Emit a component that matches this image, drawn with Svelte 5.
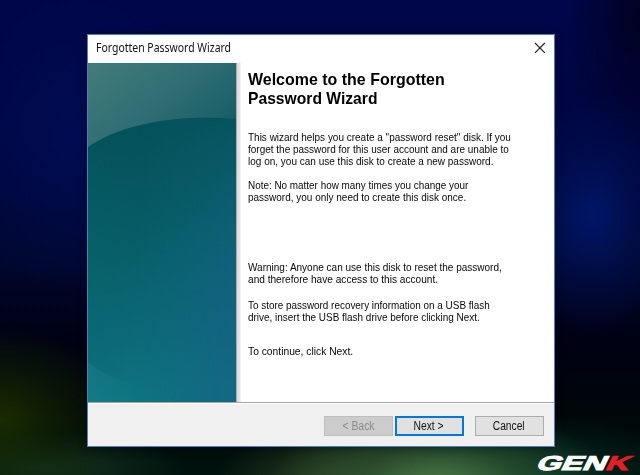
<script>
  const groups = [
    { top: 22.5, lines: [
      ['This wizard helps you create a "password reset" disk. If you', 263],
      ['forget the password for this user account and are unable to', 260.5],
      ['log on, you can use this disk to create a new password.', 245.5]
    ] },
    { top: 12, lines: [
      ['Note: No matter how many times you change your', 220.5],
      ['password, you only need to create this disk once.', 218]
    ] },
    { top: 57, lines: [
      ['Warning: Anyone can use this disk to reset the password,', 254],
      ['and therefore have access to this account.', 190]
    ] },
    { top: 14, lines: [
      ['To store password recovery information on a USB flash', 242],
      ['drive, insert the USB flash drive before clicking Next.', 232]
    ] },
    { top: 21.5, lines: [['To continue, click Next.', 105.5]] }
  ];

  // Condenses a line of text to the given width in pixels.
  function fit(node, width) {
    node.style.transform = `scaleX(${width / node.offsetWidth})`;
  }
</script>

<main class="desktop">
  <section class="window">
    <header>
      <span class="fit" use:fit={135}>Forgotten Password Wizard</span>
      <svg class="close" width="12" height="12" viewBox="0 0 12 12" aria-label="Close">
        <path d="M1 1 10.8 10.8M10.8 1 1 10.8" />
      </svg>
    </header>
    <div class="content">
      <svg class="banner" width="148" height="339" viewBox="0 0 148 339" preserveAspectRatio="none">
        <defs>
          <linearGradient id="sky" x1="0" y1="0" x2="1" y2="1" gradientUnits="objectBoundingBox">
            <stop offset="0" stop-color="#437b7b" />
            <stop offset=".38" stop-color="#306f74" />
            <stop offset="1" stop-color="#06505c" />
          </linearGradient>
          <linearGradient id="sea" x1="0.3" y1="0" x2="0.45" y2="1">
            <stop offset="0" stop-color="#055059" />
            <stop offset=".4" stop-color="#075c66" />
            <stop offset=".75" stop-color="#0c6a78" />
            <stop offset="1" stop-color="#0f7884" />
          </linearGradient>
          <linearGradient id="side" x1="0" y1="0" x2="1" y2="0.15">
            <stop offset="0" stop-color="#00736a" stop-opacity=".32" />
            <stop offset=".4" stop-color="#0d6374" stop-opacity=".05" />
            <stop offset="1" stop-color="#155f83" stop-opacity=".65" />
          </linearGradient>
          <linearGradient id="fade" x1="0" y1="0" x2="0" y2="1">
            <stop offset=".1" stop-color="#000" />
            <stop offset=".7" stop-color="#fff" />
          </linearGradient>
          <linearGradient id="glow" x1="0" y1="0" x2="1" y2="0">
            <stop offset="0" stop-color="#43a9ad" stop-opacity=".15" />
            <stop offset="1" stop-color="#43a9ad" stop-opacity="0" />
          </linearGradient>
          <mask id="lower"><rect width="148" height="339" fill="url(#fade)" /></mask>
        </defs>
        <rect width="148" height="120" fill="url(#sky)" />
        <path d="M0 84C32 62 85 51 148 56V339H0Z" fill="url(#sea)" />
        <path d="M0 84C32 62 85 51 148 56V339H0Z" fill="url(#side)" mask="url(#lower)" />
        <path d="M0 299Q20 316 48 322V339H0Z" fill="url(#glow)" />
      </svg>
      <div class="shade"></div>
      <article>
        <h1>
          <span class="fit" use:fit={196.5}>Welcome to the Forgotten</span>
          <span class="fit" use:fit={129}>Password Wizard</span>
        </h1>
        {#each groups as group}
          <p style="margin-top: {group.top}px">
            {#each group.lines as [text, width]}
              <span class="fit" use:fit={width}>{text}</span>
            {/each}
          </p>
        {/each}
      </article>
    </div>
    <footer>
      <button class="back" disabled><span class="fit label" use:fit={32}>&lt; Back</span></button>
      <button class="next"><span class="fit label" use:fit={30}>Next &gt;</span></button>
      <button class="cancel"><span class="fit label" use:fit={31.5}>Cancel</span></button>
    </footer>
  </section>
  <div class="logo">GEN<b>K</b></div>
</main>

<style>
  :global(body) { margin: 0; }
  .desktop {
    position: relative;
    box-sizing: border-box;
    width: 640px;
    height: 475px;
    padding: 34px 0 0 87px;
    overflow: hidden;
    font-family: "Liberation Sans", Arial, sans-serif;
    background:
      radial-gradient(ellipse 170px 80px at 440px 485px, rgba(83, 130, 75, .95), rgba(50, 90, 52, .65) 48%, transparent),
      radial-gradient(ellipse 120px 55px at 335px 480px, rgba(62, 83, 42, .7), transparent),
      radial-gradient(ellipse 150px 60px at 535px 475px, rgba(5, 55, 45, .65), transparent),
      radial-gradient(ellipse 125px 95px at 0 420px, rgba(27, 46, 0, .95), rgba(16, 34, 4, .6) 50%, transparent),
      radial-gradient(ellipse 160px 35px at 30px 467px, rgba(28, 65, 40, .8), transparent),
      radial-gradient(ellipse 90px 120px at 592px 215px, rgba(0, 26, 116, .8), rgba(0, 18, 88, .5) 50%, transparent),
      radial-gradient(ellipse 75px 150px at 640px 20px, rgba(0, 0, 25, .8), transparent),
      radial-gradient(ellipse 140px 150px at 75px 140px, rgba(0, 16, 90, .7), transparent),
      linear-gradient(#00064a, #000540 30%, #00072e 55%, #000112 72%, #000609 86%, #00120d);
  }
  .window {
    display: flex;
    flex-direction: column;
    box-sizing: border-box;
    width: 467.5px;
    height: 413px;
    border: 1px solid #497fbd;
    background: #fff;
    box-shadow: 0 1px 8px rgba(0, 0, 0, .35);
  }
  header {
    display: flex;
    flex: 0 0 28px;
    box-sizing: border-box;
    height: 28px;
    padding: 0 8px 2px 7.5px;
    align-items: center;
    justify-content: space-between;
    font: 12px/16px "Noto Sans", sans-serif;
    color: #111;
  }
  .close { fill: none; stroke: #222; stroke-width: 1.15; }
  .fit { display: block; width: max-content; transform-origin: left center; white-space: nowrap; }
  .content { display: flex; flex: 0 0 339px; height: 339px; }
  .banner { display: block; flex: none; }
  .shade { flex: none; width: 5px; background: linear-gradient(90deg, #aaa 0 1px, #dcdcdc 1px, #e5e5e5 4px, #fff); }
  article { flex: 1; min-width: 0; padding: 7px 0 0 7px; }
  h1 { margin: 0 0 23.5px; font-size: 16.5px; line-height: 18.5px; font-weight: 700; color: #000; }
  p { margin: 0; font-size: 11.5px; line-height: 12.2px; color: #080808; }
  footer {
    display: flex;
    flex: 1;
    box-sizing: border-box;
    padding: 13px 10px 0 0;
    align-items: flex-start;
    justify-content: flex-end;
    border-top: 1px solid #a5a5a5;
    box-shadow: inset 0 1px #fff;
    background: #f0f0f0;
  }
  button {
    display: flex;
    align-items: center;
    justify-content: center;
    box-sizing: border-box;
    width: 69px;
    height: 20px;
    margin: 0;
    padding: 0;
    border: 1px solid #adadad;
    background: #e1e1e1;
    color: #111;
    font: 12px/16px "Liberation Sans", Arial, sans-serif;
  }
  .label { transform-origin: center; }
  .back { border-color: #bfbfbf; background: #ccc; color: #8b8b8b; }
  .next { margin-left: 1.5px; border: 2px solid #0078d7; }
  .cancel { margin-left: 11px; }
  .logo {
    position: absolute;
    left: 533px;
    top: 453px;
    color: #fff;
    font-size: 20px;
    line-height: 21px;
    font-weight: 700;
    -webkit-text-stroke: 1px currentColor;
    transform: scaleX(1.6) skewX(-17deg);
    transform-origin: left bottom;
  }
  .logo b { color: #e31e26; }
</style>
